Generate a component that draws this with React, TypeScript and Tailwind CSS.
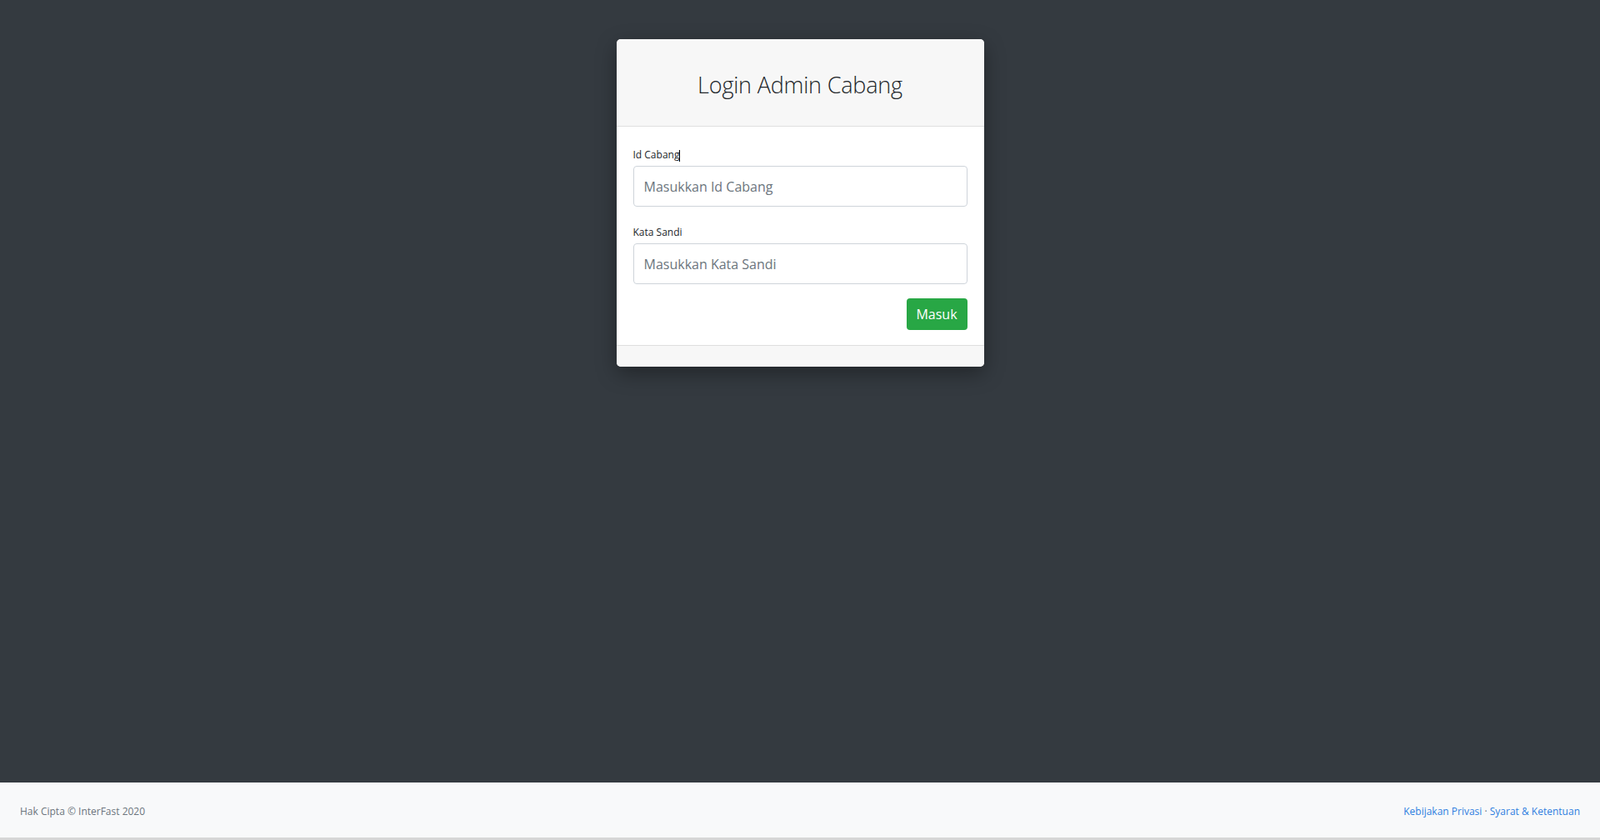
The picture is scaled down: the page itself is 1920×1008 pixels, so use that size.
export default function App() {
    const font = { fontFamily: '"Open Sans", "Noto Sans", sans-serif' };

    return (
        <div className="h-screen flex flex-col bg-[#343a40]" style={font}>
            <main className="flex-1 flex justify-center pt-[47px]">
                <div className="w-[441px] h-[393px] bg-white rounded-[5px] shadow-[0_8px_24px_rgba(0,0,0,0.35)] flex flex-col overflow-hidden">
                    <div className="h-[105px] bg-[#f7f7f7] border-b border-[#dfdfdf] flex items-center justify-center pt-[6px]">
                        <h3 className="text-[27px] font-light text-[#212529] tracking-[-0.2px]">Login Admin Cabang</h3>
                    </div>

                    <form className="px-5 pt-[25px] pb-[18px] border-b border-[#dfdfdf]">
                        <div className="mb-[22px]">
                            <label htmlFor="idCabang" className="block text-[12px] text-[#212529] leading-[18px] mb-[4px]">
                                Id Cabang<span className="inline-block w-px h-[14px] bg-black align-middle" />
                            </label>
                            <input
                                id="idCabang"
                                type="text"
                                placeholder="Masukkan Id Cabang"
                                className="w-full h-[49px] border border-[#ced4da] rounded-[4px] px-3 text-[16px] text-[#495057] placeholder:text-[#6c757d] focus:outline-none"
                            />
                        </div>

                        <div className="mb-[17px]">
                            <label htmlFor="kataSandi" className="block text-[12px] text-[#212529] leading-[18px] mb-[4px]">
                                Kata Sandi
                            </label>
                            <input
                                id="kataSandi"
                                type="password"
                                placeholder="Masukkan Kata Sandi"
                                className="w-full h-[49px] border border-[#ced4da] rounded-[4px] px-3 text-[16px] text-[#495057] placeholder:text-[#6c757d] focus:outline-none"
                            />
                        </div>

                        <div className="flex justify-end">
                            <button
                                type="submit"
                                className="h-[38px] w-[73px] bg-[#28a745] text-white text-[16px] rounded-[4px]"
                            >
                                Masuk
                            </button>
                        </div>
                    </form>

                    <div className="flex-1 bg-[#f7f7f7]" />
                </div>
            </main>

            <footer className="h-[66px] bg-[#f8f9fa] flex items-center justify-between px-6 pt-[4px] text-[12px]">
                <span className="text-[#6c757d]">Hak Cipta &copy; InterFast 2020</span>
                <span className="text-[#6c757d]">
                    <a href="#" className="text-[#2f7fe0]">Kebijakan Privasi</a>
                    {' '}&middot;{' '}
                    <a href="#" className="text-[#2f7fe0]">Syarat &amp; Ketentuan</a>
                </span>
            </footer>
            <div className="h-[3px] bg-[#d6d6d6]" />
        </div>
    );
}
